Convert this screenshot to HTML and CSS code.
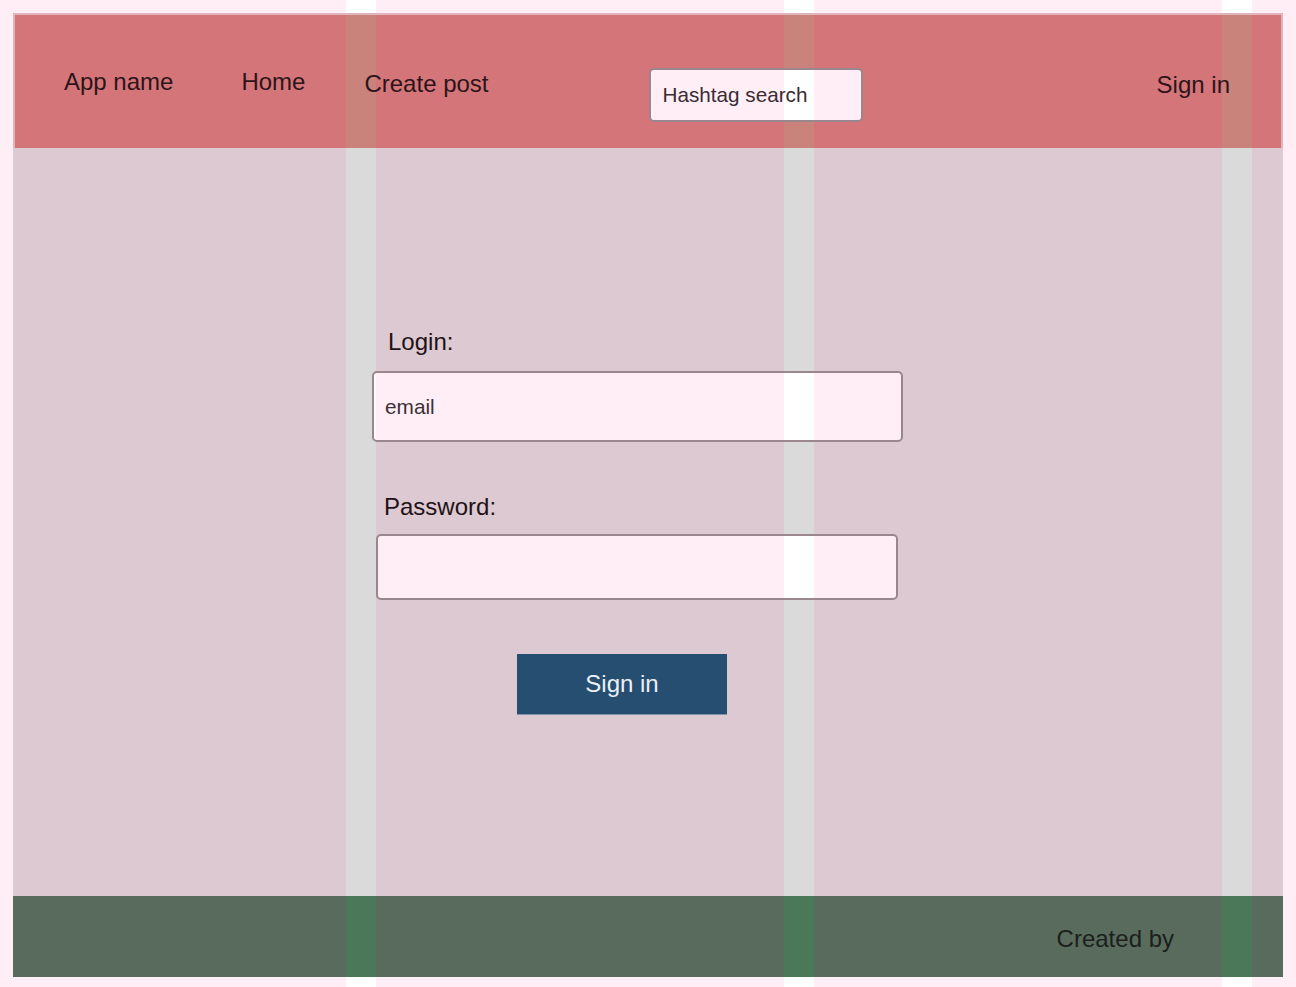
FILE: index.html
```html
<!DOCTYPE html>
<html lang="en">
<head>
<meta charset="utf-8">
<title>Sign in</title>
<link rel="stylesheet" href="styles.css">
</head>
<body class="striped">
  <div class="page">
    <header class="header striped">
      <a class="nav-item nav-app" href="#">App name</a>
      <a class="nav-item nav-home" href="#">Home</a>
      <a class="nav-item nav-create" href="#">Create post</a>
      <input class="search striped" type="text" placeholder="Hashtag search">
      <a class="nav-item nav-signin" href="#">Sign in</a>
    </header>
    <main class="main striped">
      <form class="login-form">
        <label class="label label-login" for="email">Login:</label>
        <input id="email" class="field field-email striped" type="text" placeholder="email">
        <label class="label label-password" for="password">Password:</label>
        <input id="password" class="field field-password striped" type="password">
        <button class="submit" type="button">Sign in</button>
      </form>
    </main>
    <footer class="footer striped">
      <span class="credit">Created by</span>
    </footer>
  </div>
</body>
</html>
```

FILE: styles.css
```css
html {
  overflow: hidden;
}

body {
  margin: 0;
  padding: 13px 13px 10px 13px;
  background-color: #ffeef5;
  --sc: #ffffff;
  font-family: "Liberation Sans", Arial, sans-serif;
}

.striped {
  background-image: linear-gradient(90deg,
    transparent 346px, var(--sc) 346px, var(--sc) 376px, transparent 376px,
    transparent 784px, var(--sc) 784px, var(--sc) 814px, transparent 814px,
    transparent 1222px, var(--sc) 1222px, var(--sc) 1252px, transparent 1252px);
  background-attachment: fixed;
}

.page {
  width: 1270px;
}

/* Header */
.header {
  height: 135px;
  box-sizing: border-box;
  border: 2px solid #dfb5bb;
  border-bottom: 0;
  background-color: #d47679;
  --sc: #c9837b;
  display: flex;
  align-items: flex-start;
  padding: 53px 51px 0 49px;
}

.nav-item {
  font-size: 24px;
  line-height: 28px;
  color: #2d1419;
  text-decoration: none;
  white-space: nowrap;
}

.nav-home {
  margin-left: 68px;
}

.nav-create {
  margin-left: 59px;
  margin-top: 2px;
}

.search {
  margin-left: 160px;
  margin-top: 0;
  width: 214px;
  height: 54px;
  box-sizing: border-box;
  border: 2px solid #9a868d;
  border-radius: 5px;
  background-color: #ffeef5;
  --sc: #ffffff;
  padding: 0 12px;
  font-family: "Liberation Sans", Arial, sans-serif;
  font-size: 20.7px;
  color: #3a2c32;
  outline: none;
}

.search::placeholder {
  color: #3a2c32;
  opacity: 1;
}

.nav-signin {
  margin-left: auto;
  margin-top: 3px;
}

/* Main */
.main {
  height: 748px;
  box-sizing: border-box;
  background-color: #ddc9d2;
  --sc: #dadada;
  padding: 180px 0 0 359px;
}

.login-form {
  display: flex;
  flex-direction: column;
  align-items: flex-start;
}

.label {
  display: block;
  font-size: 24px;
  line-height: 28px;
  color: #201216;
}

.label-login {
  margin-left: 16px;
}

.field {
  box-sizing: border-box;
  border: 2px solid #9a868d;
  border-radius: 5px;
  background-color: #ffeef5;
  --sc: #ffffff;
  padding: 0 11px;
  font-family: "Liberation Sans", Arial, sans-serif;
  font-size: 20.8px;
  color: #3d3035;
  outline: none;
}

.field::placeholder {
  color: #3d3035;
  opacity: 1;
}

.field-email {
  margin-top: 15px;
  width: 531px;
  height: 71px;
}

.label-password {
  margin-top: 51px;
  margin-left: 12px;
}

.field-password {
  margin-top: 13px;
  margin-left: 4px;
  width: 522px;
  height: 66px;
}

.submit {
  margin-top: 54px;
  margin-left: 145px;
  width: 210px;
  height: 61px;
  border: 0;
  border-bottom: 1px solid #7f93ab;
  background-color: #254e70;
  color: #eef0f8;
  font-family: "Liberation Sans", Arial, sans-serif;
  font-size: 24px;
  padding: 0 0 1px 0;
  cursor: pointer;
}

/* Footer */
.footer {
  height: 81px;
  box-sizing: border-box;
  background-color: #586b5c;
  --sc: #4a7858;
  padding: 29px 109px 0 0;
  text-align: right;
}

.credit {
  font-size: 24px;
  line-height: 28px;
  color: #1c1f1c;
}
```
